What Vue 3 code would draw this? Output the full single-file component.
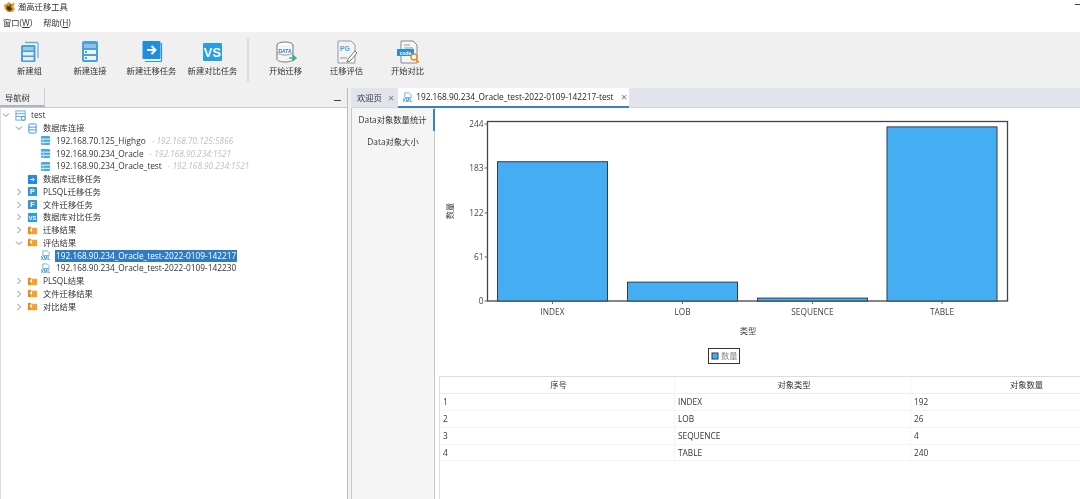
<script setup>
const toolsA = [
  { label: '新建组', icon: 'group', w: 59 },
  { label: '新建连接', icon: 'conn', w: 62 },
  { label: '新建迁移任务', icon: 'move', w: 61 },
  { label: '新建对比任务', icon: 'vs', w: 61 },
]
const toolsB = [
  { label: '开始迁移', icon: 'data' },
  { label: '迁移评估', icon: 'pg' },
  { label: '开始对比', icon: 'code' },
]
const tree = [
  { depth: 0, arrow: 'down', icon: 'root', label: 'test' },
  { depth: 1, arrow: 'down', icon: 'db', label: '数据库连接' },
  { depth: 2, icon: 'server', label: '192.168.70.125_Highgo', note: '192.168.70.125:5866' },
  { depth: 2, icon: 'server', label: '192.168.90.234_Oracle', note: '192.168.90.234:1521' },
  { depth: 2, icon: 'server', label: '192.168.90.234_Oracle_test', note: '192.168.90.234:1521' },
  { depth: 1, icon: 'move', label: '数据库迁移任务' },
  { depth: 1, arrow: 'right', icon: 'P', label: 'PLSQL迁移任务' },
  { depth: 1, arrow: 'right', icon: 'F', label: '文件迁移任务' },
  { depth: 1, arrow: 'right', icon: 'VS', label: '数据库对比任务' },
  { depth: 1, arrow: 'right', icon: 'folder', label: '迁移结果' },
  { depth: 1, arrow: 'down', icon: 'folder', label: '评估结果' },
  { depth: 2, icon: 'xml', label: '192.168.90.234_Oracle_test-2022-0109-142217', selected: true },
  { depth: 2, icon: 'xml', label: '192.168.90.234_Oracle_test-2022-0109-142230' },
  { depth: 1, arrow: 'right', icon: 'folder', label: 'PLSQL结果' },
  { depth: 1, arrow: 'right', icon: 'folder', label: '文件迁移结果' },
  { depth: 1, arrow: 'right', icon: 'folder', label: '对比结果' },
]
const rows = [
  { no: 1, type: 'INDEX', count: 192 },
  { no: 2, type: 'LOB', count: 26 },
  { no: 3, type: 'SEQUENCE', count: 4 },
  { no: 4, type: 'TABLE', count: 240 },
]
const baseY = 301
const bars = [
  { name: 'INDEX', x: 497.5, value: 192 },
  { name: 'LOB', x: 627.5, value: 26 },
  { name: 'SEQUENCE', x: 757.5, value: 4 },
  { name: 'TABLE', x: 887, value: 240 },
].map((b) => ({ ...b, w: 110, h: (b.value / 244) * 177, cx: b.x + 55 }))
const ticks = [
  { label: '244', y: 124 },
  { label: '183', y: 168 },
  { label: '122', y: 213 },
  { label: '61', y: 257 },
  { label: '0', y: 301 },
]
</script>

<template>
  <div class="app">
    <header class="title">
      <svg class="logo" viewBox="0 0 14 12" width="13" height="11">
        <path d="M1 3l3-1 2-2 3 2 4-1-2 4 2 3-3 3H5L2 8z" fill="#d99a2b" />
        <path d="M4 4l4 1 2 3-3 2-3-2z" fill="#4a3418" />
        <circle cx="8" cy="3.600" r="1" fill="#4a3418" />
      </svg>
      <span>瀚高迁移工具</span>
      <i class="min"></i>
    </header>
    <nav class="menu"><span>窗口(<u>W</u>)</span><span>帮助(<u>H</u>)</span></nav>

    <section class="toolbar">
      <div class="tools first">
        <div v-for="t in toolsA" :key="t.label" class="tool" :style="{ width: t.w + 'px' }">
          <svg viewBox="0 0 24 24" width="24" height="24">
            <template v-if="t.icon === 'group'">
              <path d="M7 2.500h12a1 1 0 0 1 1 1V18" fill="none" stroke="#6aaede" stroke-width="1.300" />
              <rect x="3" y="5" width="14.500" height="17" rx="1.500" fill="#4a9fdc" />
              <rect x="5" y="7" width="10.500" height="3.500" fill="#9ccaec" />
              <rect x="5" y="12" width="10.500" height="3.500" fill="#e4f0f9" />
              <rect x="5" y="17" width="10.500" height="3.500" fill="#e4f0f9" />
            </template>
            <template v-else-if="t.icon === 'conn'">
              <rect x="4" y="1" width="16" height="21" rx="2" fill="#4a9fdc" />
              <rect x="6" y="4" width="12" height="4" fill="#8cc2ea" />
              <rect x="6" y="10" width="12" height="4" fill="#eef6fc" />
              <rect x="6" y="16" width="12" height="4" fill="#eef6fc" />
              <circle cx="8" cy="12" r="1" fill="#2a7fc0" /><circle cx="8" cy="18" r="1" fill="#2a7fc0" />
            </template>
            <template v-else-if="t.icon === 'move'">
              <rect x="2.500" y="1" width="18" height="18" rx="1" fill="#1f8fdc" />
              <path d="M21.500 3v17.500a1 1 0 0 1-1 1H5" fill="none" stroke="#2f97dc" stroke-width="1.200" />
              <path d="M7 10h8M11.500 6l4 4-4 4" fill="none" stroke="#fff" stroke-width="2" />
            </template>
            <template v-else>
              <rect x="2" y="3" width="19" height="18" rx="1" fill="#27a0e4" />
              <text x="11.500" y="17" text-anchor="middle" class="vs-text">VS</text>
            </template>
          </svg>
          <span>{{ t.label }}</span>
        </div>
      </div>
      <div class="divider"></div>
      <div class="tools">
        <div v-for="t in toolsB" :key="t.label" class="tool second">
          <svg viewBox="0 0 24 24" width="24" height="24">
            <template v-if="t.icon === 'data'">
              <ellipse cx="11" cy="5" rx="8" ry="3" fill="#fff" stroke="#777" />
              <path d="M3 5v14c0 1.700 3.500 3 8 3s8-1.300 8-3V5" fill="#f6f6f6" stroke="#777" />
              <path d="M3 12c0 1.700 3.500 3 8 3s8-1.300 8-3" fill="none" stroke="#999" />
              <text x="11" y="13" text-anchor="middle" class="mini blue">DATA</text>
              <path d="M15 18h6M19 15.500l3 2.500-3 2.500z" fill="#3cb48c" stroke="#3cb48c" stroke-width="1.500" />
            </template>
            <template v-else-if="t.icon === 'pg'">
              <path d="M3 1h13l4 4v18H3z" fill="#f4f4f4" stroke="#999" />
              <text x="10" y="11" text-anchor="middle" class="mini pg">PG</text>
              <path d="M5 18h7" stroke="#999" />
              <path d="M13 19l7-8 2 2-7 8-3 1z" fill="#fff" stroke="#777" />
            </template>
            <template v-else>
              <path d="M5 1h12l4 4v18H5z" fill="#f6f6f6" stroke="#888" />
              <path d="M8 5h6M8 8h9" stroke="#999" />
              <rect x="1" y="9" width="17" height="7" fill="#2a8fd8" />
              <text x="9.500" y="15" text-anchor="middle" class="mini white">code</text>
              <circle cx="18" cy="17" r="3" fill="#fff" stroke="#f08a24" stroke-width="1.500" />
              <path d="M20 19.500l3 3" stroke="#f08a24" stroke-width="1.500" />
            </template>
          </svg>
          <span>{{ t.label }}</span>
        </div>
      </div>
    </section>

    <main class="main">
      <aside class="left">
        <div class="strip">
          <span class="nav-tab">导航树</span>
          <i class="min small"></i>
        </div>
        <ul class="tree">
          <li v-for="n in tree" :key="n.label" class="row" :class="'d' + n.depth">
            <svg class="arrow" viewBox="0 0 8 8" width="8" height="8">
              <path v-if="n.arrow === 'down'" d="M1 2.500l3 3 3-3" fill="none" stroke="#888" />
              <path v-else-if="n.arrow === 'right'" d="M2.500 1l3 3-3 3" fill="none" stroke="#888" />
            </svg>
            <svg class="ico" viewBox="0 0 12 12" width="11" height="11">
              <template v-if="n.icon === 'root'">
                <rect x="1" y="1" width="10" height="10" fill="#fff" stroke="#5aa8e0" />
                <path d="M1 4h10M1 7h10" stroke="#5aa8e0" />
                <circle cx="9" cy="9" r="2.200" fill="#fff" stroke="#3a9a9a" />
              </template>
              <template v-else-if="n.icon === 'db'">
                <rect x="2" y="1" width="8" height="10" rx="1" fill="#fff" stroke="#3c8fd0" />
                <path d="M2 4.500h8M2 7.500h8" stroke="#3c8fd0" />
              </template>
              <template v-else-if="n.icon === 'server'">
                <rect x="1" y="1" width="10" height="10" rx="1.500" fill="#4aa6e0" />
                <path d="M1 4.500h10M1 8h10" stroke="#fff" />
                <path d="M3 6.200h1M3 9.700h1" stroke="#fff" />
              </template>
              <template v-else-if="n.icon === 'move'">
                <rect x="1" y="1" width="10" height="10" rx="1" fill="#1f8fdc" />
                <path d="M3.500 6h4M6 4l2 2-2 2" fill="none" stroke="#fff" />
              </template>
              <template v-else-if="n.icon === 'P' || n.icon === 'F'">
                <rect x="1" y="1" width="10" height="10" rx="1" fill="#2f97dc" />
                <text x="6" y="9" text-anchor="middle" class="ico-text">{{ n.icon }}</text>
              </template>
              <template v-else-if="n.icon === 'VS'">
                <rect x="1" y="1" width="10" height="10" fill="#2f9fe2" />
                <text x="6" y="8.500" text-anchor="middle" class="ico-text vs">VS</text>
              </template>
              <template v-else-if="n.icon === 'folder'">
                <path d="M1 2h3.500v8H1z" fill="#f08c10" />
                <path d="M4.500 3H11v7H4.500z" fill="#f8a02c" />
                <rect x="3.500" y="4" width="2" height="3" fill="#fff" />
              </template>
              <template v-else>
                <path d="M3 1h5l2 2v3H3z" fill="#fff" stroke="#4a9fdc" stroke-width=".8" />
                <text x="6" y="11" text-anchor="middle" class="ico-text xml">XML</text>
              </template>
            </svg>
            <span class="label" :class="{ selected: n.selected }">{{ n.label }}</span>
            <span v-if="n.note" class="note">- {{ n.note }}</span>
          </li>
        </ul>
      </aside>

      <section class="right">
        <div class="tabs">
          <div class="tab"><span>欢迎页</span><b>×</b></div>
          <div class="tab active">
            <svg viewBox="0 0 12 12" width="11" height="11">
              <path d="M3 1h5l2 2v3H3z" fill="#fff" stroke="#4a9fdc" stroke-width=".8" />
              <text x="6" y="11" text-anchor="middle" class="ico-text xml">XML</text>
            </svg>
            <span>192.168.90.234_Oracle_test-2022-0109-142217-test</span><b>×</b>
          </div>
        </div>
        <div class="body">
          <div class="side">
            <div class="side-item on">Data对象数量统计</div>
            <div class="side-item">Data对象大小</div>
          </div>
          <div class="content">
            <svg class="chart" viewBox="435 108 645 268" width="645" height="268">
              <rect x="487.500" y="121.500" width="520" height="179.500" fill="#fff" stroke="#444" stroke-width="1.300" />
              <g v-for="t in ticks" :key="t.label">
                <path :d="`M484.500 ${t.y}h3`" stroke="#666" />
                <text x="483.500" :y="t.y + 3" text-anchor="end" class="axis">{{ t.label }}</text>
              </g>
              <g v-for="b in bars" :key="b.name">
                <rect :x="b.x" :y="baseY - b.h" :width="b.w" :height="b.h" fill="#45aef2" stroke="#2c3e50" />
                <path :d="`M${b.cx} 301v3`" stroke="#666" />
                <text :x="b.cx" y="315" text-anchor="middle" class="axis">{{ b.name }}</text>
              </g>
              <text x="748" y="334" text-anchor="middle" class="axis">类型</text>
              <text transform="translate(453 211) rotate(-90)" text-anchor="middle" class="axis">数量</text>
              <rect x="708.500" y="348.500" width="31" height="15" fill="#fff" stroke="#333" />
              <rect x="712" y="353" width="6" height="6" fill="#45aef2" stroke="#2c3e50" />
              <text x="721" y="359" class="axis legend">数量</text>
            </svg>
            <div class="table">
              <div class="tr head"><div>序号</div><div>对象类型</div><div>对象数量</div></div>
              <div v-for="r in rows" :key="r.no" class="tr"><div>{{ r.no }}</div><div>{{ r.type }}</div><div>{{ r.count }}</div></div>
            </div>
          </div>
        </div>
      </section>
    </main>
  </div>
</template>

<style>
html, body { margin: 0; background: #fff; }
</style>

<style scoped>
* { box-sizing: border-box; }
.app {
  width: 1080px; height: 499px; overflow: hidden; display: flex; flex-direction: column;
  font: 8.3px/1.2 "Open Sans", "Noto Sans CJK SC", sans-serif; color: #333; background: #fff;
  filter: blur(0.3px);
}
.title { height: 14px; display: flex; align-items: center; gap: 2px; padding-left: 3px; flex: none; position: relative; }
.logo { flex: none; }
.min { position: absolute; right: 0; top: 4px; width: 5px; height: 1px; background: #444; }
.menu { height: 18px; display: flex; gap: 11px; align-items: center; padding-left: 3px; flex: none; }
.toolbar { height: 56px; flex: none; background: #f0f0f0; display: flex; align-items: flex-start; }
.tools { display: flex; padding-top: 8px; }
.tool { display: flex; flex-direction: column; align-items: center; gap: 2px; white-space: nowrap; }
.second { width: 61px; }
.divider { width: 2px; height: 44px; background: #dcdcdc; margin: 6px 6px 0 4px; }
.main { flex: 1; display: flex; min-height: 0; background: #f0f0f0; }
.left { width: 348px; flex: none; display: flex; flex-direction: column; border-right: 1px solid #bbb; }
.strip { height: 20px; flex: none; display: flex; position: relative; border-bottom: 1px solid #ccc; }
.nav-tab { width: 45px; padding: 5px 0 0 5px; border-right: 1px solid #d0d0d0; border-bottom: 2px solid #a9b4c4; }
.min.small { right: 6px; top: 12px; width: 7px; }
.tree { flex: 1; margin: 0; padding: 1px 0 0; list-style: none; background: #fff; border-left: 1px solid #ddd; }
.row { height: 12.75px; display: flex; align-items: center; white-space: nowrap; }
.d0 { padding-left: 1px; }
.d1 { padding-left: 14px; }
.d2 { padding-left: 26px; }
.arrow { flex: none; margin-right: 4px; }
.d0 .arrow, .d2 .arrow { margin-right: 5px; }
.ico { flex: none; margin-right: 4px; }
.label { padding: 0 1px; line-height: 12px; }
.selected { background: #2f7cc4; color: #fff; }
.note { margin-left: 5px; color: #c0c0c0; font-style: italic; }
.ico-text { font: 700 8px "Liberation Sans", sans-serif; fill: #fff; }
.ico-text.vs { font-size: 6px; }
.ico-text.xml { font-size: 5px; fill: #3c8fd0; }
.vs-text { font: 700 13px "Liberation Sans", sans-serif; fill: #fff; }
.mini { font: 700 5px "Liberation Sans", sans-serif; }
.blue { fill: #2a7fc0; }
.pg { fill: #4a9fdc; font-size: 7px; }
.white { fill: #fff; }
.right { flex: 1; min-width: 0; display: flex; flex-direction: column; margin-left: 3px; }
.tabs { height: 20px; flex: none; display: flex; background: #e1e4ed; border-bottom: 1px solid #d5d5dc; }
.tab { display: flex; align-items: center; height: 20px; padding: 0 4px 0 6px; gap: 6px; white-space: nowrap; }
.tab b { font-weight: 400; font-size: 11px; color: #777; }
.active { background: #fff; border-bottom: 2px solid #3a80c4; color: #222; width: 231px; padding: 0 2px 0 4px; gap: 3px; }
.active b { margin-left: auto; }
.body { flex: 1; display: flex; background: #fff; border-left: 1px solid #c8c8c8; min-height: 0; }
.side { width: 83px; flex: none; background: #f5f5f5; border-right: 1px solid #c4c4c4; padding-top: 1px; }
.side-item { height: 22px; line-height: 22px; text-align: center; white-space: nowrap; }
.side-item.on { border-right: 2px solid #3a80c4; margin-right: -1px; }
.content { flex: 1; min-width: 0; display: flex; flex-direction: column; }
.chart { display: block; flex: none; }
.axis { font: 8.3px "Open Sans", "Noto Sans CJK SC", sans-serif; fill: #444; }
.legend { fill: #888; }
.table { margin-left: 4px; flex: 1; width: 700px; border-top: 1px solid #ddd; border-left: 1px solid #ddd; }
.tr { display: grid; grid-template-columns: 235px 236px 229px; height: 16.9px; border-bottom: 1px solid #f5f5f5; align-items: center; }
.tr > div { height: 100%; line-height: 16.9px; padding-left: 3px; border-right: 1px solid #f5f5f5; }
.head > div { text-align: center; }
.head { border-bottom-color: #eee; }
</style>
